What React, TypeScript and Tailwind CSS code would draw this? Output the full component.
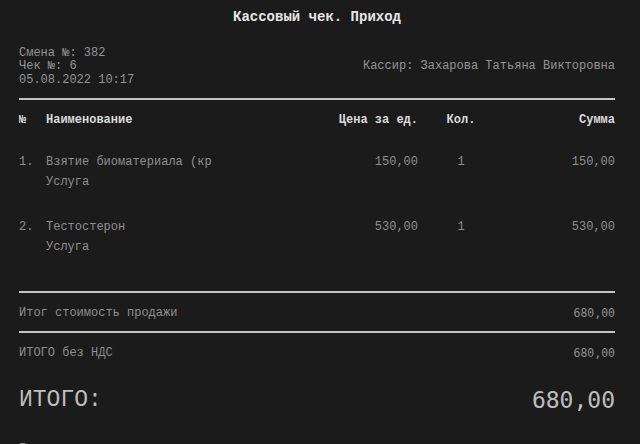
const items = [
  { n: 1, name: "Взятие биоматериала (кр", kind: "Услуга", price: "150,00", qty: "1", sum: "150,00" },
  { n: 2, name: "Тестостерон", kind: "Услуга", price: "530,00", qty: "1", sum: "530,00" },
];

const mono = "font-['Liberation_Mono','Courier_New',monospace]";
const sansMono = "font-['DejaVu_Sans_Mono','Liberation_Mono',monospace]";
const cols = "grid grid-cols-[27px_253px_119px_86px_111px]";

function Rule() {
  return <div className="h-[2px] w-full bg-[#c4c4c4]" />;
}

export default function App() {
  return (
    <div className={`h-[444px] overflow-hidden bg-[#1b1b1b] pl-[19px] pr-[25px] pt-[9px] ${mono}`}>
      <h1 className="text-center text-[14px] font-bold leading-[16px] text-[#e6e6e6]">
        Кассовый чек. Приход
      </h1>

      <div className="mt-[21.5px] flex items-center justify-between text-[12px] leading-[13.5px] text-[#949494]">
        <div>
          <p>Смена №: 382</p>
          <p>Чек №: 6</p>
          <p>05.08.2022 10:17</p>
        </div>
        <p>Кассир: Захарова Татьяна Викторовна</p>
      </div>

      <div className="mt-[11px]">
        <Rule />
      </div>

      <div className={`${cols} mt-[12px] text-[12px] font-bold leading-[16px] text-[#dadada]`}>
        <span>№</span>
        <span>Наименование</span>
        <span className="text-right">Цена за ед.</span>
        <span className="text-center">Кол.</span>
        <span className="text-right">Сумма</span>
      </div>

      <div className="mt-[24px] flex flex-col gap-[25px]">
        {items.map((it) => (
          <div key={it.n} className={`${cols} text-[12px] leading-[20px] text-[#8f8f8f]`}>
            <span>{it.n}.</span>
            <div>
              <p>{it.name}</p>
              <p>{it.kind}</p>
            </div>
            <span className="text-right">{it.price}</span>
            <span className="text-center">{it.qty}</span>
            <span className="text-right">{it.sum}</span>
          </div>
        ))}
      </div>

      <div className="mt-[34px]">
        <Rule />
      </div>
      <div className="mt-[12px] flex justify-between text-[12px] leading-[16px] text-[#8f8f8f]">
        <span>Итог стоимость продажи</span>
        <span className={`${sansMono} text-[11.5px]`}>680,00</span>
      </div>
      <div className="mt-[10px]">
        <Rule />
      </div>
      <div className="mt-[12px] flex justify-between text-[12px] leading-[16px] text-[#8f8f8f]">
        <span>ИТОГО без НДС</span>
        <span className={`${sansMono} text-[11.5px]`}>680,00</span>
      </div>

      <div className="mt-[25px] flex items-center justify-between leading-[28px] text-[#bdbdbd]">
        <span className="text-[23px]">ИТОГО:</span>
        <span className={`${sansMono} text-[23px] font-light`}>680,00</span>
      </div>

      <div className="mt-[27px] flex justify-between text-[12px] leading-[16px] text-[#8f8f8f]">
        <span>Безналичными</span>
        <span className={`${sansMono} text-[11.5px]`}>680,00</span>
      </div>
    </div>
  );
}
